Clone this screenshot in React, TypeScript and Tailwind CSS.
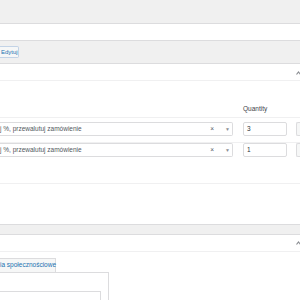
import React from "react";

const Arrow = () => (
  <svg width="5" height="4" viewBox="0 0 5 4" className="block">
    <path d="M0.5 3.5 L2.5 1 L4.5 3.5" fill="none" stroke="#8c8f94" strokeWidth="1.2" />
  </svg>
);

const Row = ({ qty }: { qty: string }) => (
  <div className="flex items-center h-[14px]">
    <div className="w-[233px] h-[14px] border border-l-0 border-[#dcdcde] rounded-r-[2px] bg-white flex items-center">
      <span className="flex-1 text-[6.5px] text-[#50575e] leading-none whitespace-nowrap">j %, przewalutuj zamówienie</span>
      <span className="text-[6.5px] text-[#50575e] leading-none mr-[11px]">×</span>
      <span className="text-[5px] text-[#8c8f94] leading-none mr-[2px]">▼</span>
    </div>
    <div className="w-[10px]" />
    <div className="w-[44px] h-[14px] border border-[#dcdcde] rounded-[2px] bg-white flex items-center pl-[3px]">
      <span className="text-[6.5px] text-[#2c3338] leading-none">{qty}</span>
    </div>
    <div className="w-[9px]" />
    <div className="flex-1 h-[14px] border border-r-0 border-[#dcdcde] rounded-l-[2px] bg-[#f6f7f7]" />
  </div>
);

export default function App() {
  return (
    <div className="w-[300px] h-[300px] overflow-hidden bg-white" style={{ fontFamily: '"Liberation Sans", Arial, sans-serif' }}>
      <div className="h-[23px] bg-[#f0f0f0]" />
      <div className="h-[17px] bg-white border-t border-[#dcdcde]" />
      <div className="h-[23px] bg-[#f0f0f0] border-t border-[#dcdcde] flex items-center">
        <div className="h-[12px] w-[19px] border border-l-0 border-[#c3d3e6] bg-[#f6f7f7] rounded-r-[2px] flex items-center pl-[1px]">
          <span className="text-[6px] text-[#2271b1] leading-none">Edytuj</span>
        </div>
      </div>
      <div className="h-[17px] bg-white border-t border-[#dcdcde] flex items-center justify-end pr-[0px]">
        <div className="mr-[-1px] mt-[1px]"><Arrow /></div>
      </div>
      <div className="h-[104px] border-t border-[#f0f0f1] bg-white flex flex-col">
        <div className="h-[37px] border-b border-[#f0f0f1] flex items-end pb-[5px]">
          <span className="ml-[243px] text-[6.5px] text-[#3c434a] leading-none">Quantity</span>
        </div>
        <div className="mt-[4px]"><Row qty="3" /></div>
        <div className="mt-[6px] border-t border-[#f0f0f1] pt-[0px]"><Row qty="1" /></div>
        <div className="flex-1" />
        <div className="border-b border-[#f0f0f1]" />
      </div>
      <div className="h-[40px] bg-white" />
      <div className="h-[10px] bg-[#f0f0f0] border-t border-[#dcdcde]" />
      <div className="h-[17px] bg-white border-t border-[#dcdcde] flex items-center justify-end">
        <div className="mr-[-1px]"><Arrow /></div>
      </div>
      <div className="border-t border-[#f0f0f1] pt-[6px]">
        <div className="h-[14px] w-[56px] border border-l-0 border-b-0 border-[#dcdcde] bg-[#f6f7f7] flex items-center">
          <span className="text-[6.5px] text-[#2271b1] leading-none whitespace-nowrap">ia społecznościowe</span>
        </div>
        <div className="w-[109px] h-[40px] border border-l-0 border-[#dcdcde] bg-white pt-[18px]">
          <div className="w-[101px] h-[20px] border border-l-0 border-[#dcdcde]" />
        </div>
      </div>
    </div>
  );
}
